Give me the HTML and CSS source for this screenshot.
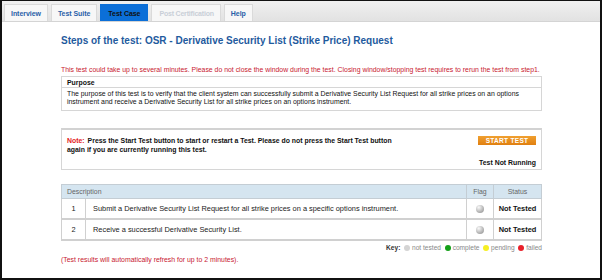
FILE: index.html
```html
<!DOCTYPE html>
<html lang="en">
<head>
    <meta charset="UTF-8">
    <title>Test Case</title>
    <link rel="stylesheet" href="styles.css">
</head>
<body>
    <div class="frame">
        <!-- Tabs -->
        <div class="tabs">
            <a class="tab">Interview</a>
            <a class="tab">Test Suite</a>
            <a class="tab active">Test Case</a>
            <a class="tab disabled">Post Certification</a>
            <a class="tab">Help</a>
        </div>

        <div class="content">
            <h1>Steps of the test: OSR - Derivative Security List (Strike Price) Request</h1>

            <p class="warning">This test could take up to several minutes. Please do not close the window during the test. Closing window/stopping test requires to rerun the test from step1.</p>

            <div class="purpose">
                <div class="purpose-head">Purpose</div>
                <div class="purpose-body">The purpose of this test is to verify that the client system can successfully submit a Derivative Security List Request for all strike prices on an options instrument and receive a Derivative Security List for all strike prices on an options instrument.</div>
            </div>

            <div class="note">
                <div class="note-text"><span class="note-label">Note:</span><span class="note-msg">Press the Start Test button to start or restart a Test. Please do not press the Start Test button again if you are currently running this test.</span></div>
                <div class="note-side">
                    <button class="start-btn">START TEST</button>
                    <div class="run-status">Test Not Running</div>
                </div>
            </div>

            <table class="steps">
                <thead>
                    <tr>
                        <th class="col-desc" colspan="2">Description</th>
                        <th class="col-flag">Flag</th>
                        <th class="col-status">Status</th>
                    </tr>
                </thead>
                <tbody>
                    <tr>
                        <td class="num">1</td>
                        <td class="desc">Submit a Derivative Security List Request for all strike prices on a specific options instrument.</td>
                        <td class="flag"><span class="dot grey"></span></td>
                        <td class="status">Not Tested</td>
                    </tr>
                    <tr>
                        <td class="num">2</td>
                        <td class="desc">Receive a successful Derivative Security List.</td>
                        <td class="flag"><span class="dot grey"></span></td>
                        <td class="status">Not Tested</td>
                    </tr>
                </tbody>
            </table>

            <div class="key">
                <b>Key:</b>
                <span class="mini grey"></span> not tested
                <span class="mini green"></span> complete
                <span class="mini yellow"></span> pending
                <span class="mini red"></span> failed
            </div>

            <p class="refresh">(Test results will automatically refresh for up to 2 minutes).</p>
        </div>
    </div>
</body>
</html>
```

FILE: styles.css
```css
* {
    margin: 0;
    padding: 0;
    box-sizing: border-box;
}

body {
    font-family: 'Liberation Sans', Arial, sans-serif;
    background: #fff;
}

.frame {
    width: 602px;
    height: 280px;
    border: 2px solid #111;
    border-top-width: 1px;
    background: #fff;
    overflow: hidden;
}

/* Tabs */
.tabs {
    display: flex;
    align-items: flex-end;
    gap: 3px;
    height: 21px;
    padding: 0 0 0 2px;
    background: linear-gradient(#f0f0f0, #e2e2e2);
    border-bottom: 1px solid #d4d4d4;
}

.tab {
    height: 17px;
    line-height: 17px;
    padding: 0 6px;
    font-size: 7px;
    font-weight: bold;
    letter-spacing: -0.05px;
    color: #2a5fa8;
    background: #f7f7f7;
    border: 1px solid #dadada;
    border-bottom: none;
}

.tab.active {
    background: #0b6fd8;
    border-color: #0b6fd8;
    padding: 0 7px;
    color: #111;
}

.tab.disabled {
    color: #c9cfd8;
    letter-spacing: -0.2px;
    padding: 0 6px 0 7px;
}

.content {
    padding: 13px 0 0 59px;
    width: 545px;
}

h1 {
    font-size: 10px;
    color: #1f5b9e;
    margin-bottom: 20px;
}

.warning {
    font-size: 6.9px;
    color: #c8202f;
    margin-bottom: 3px;
}

.purpose {
    width: 481px;
    border: 1px solid #d6d6d6;
    font-size: 6.9px;
    color: #111;
}

.purpose-head {
    font-weight: bold;
    padding: 2px 5px 1px;
    border-bottom: 1px solid #d6d6d6;
}

.purpose-body {
    padding: 2px 5px 3px;
    line-height: 1.2;
}

.note {
    display: flex;
    justify-content: space-between;
    width: 481px;
    margin-top: 17px;
    border: 1px solid #d6d6d6;
    border-top: 2px solid #d2d2d2;
    padding: 6px 5px 3px 5px;
    font-size: 6.9px;
    font-weight: bold;
    color: #111;
    height: 42px;
}

.note-text {
    width: 330px;
    line-height: 1.35;
}

.note-label {
    color: #e32222;
    margin-right: 3px;
}

.note-side {
    display: flex;
    flex-direction: column;
    align-items: flex-end;
    justify-content: space-between;
}

.start-btn {
    width: 58px;
    height: 9px;
    border: none;
    background: linear-gradient(#f0a030, #e07f10);
    color: #fff;
    font-family: inherit;
    font-size: 6.5px;
    font-weight: bold;
    letter-spacing: 0.3px;
}

.run-status {
    font-size: 6.9px;
}

/* Steps table */
.steps {
    width: 481px;
    margin-top: 14px;
    border-collapse: collapse;
    font-size: 7.4px;
    color: #222;
    border: 1px solid #d0d0d0;
}

.steps th {
    background: #d5e5f0;
    color: #666;
    font-weight: normal;
    height: 14px;
    border: 1px solid #c4cdd4;
    font-size: 6.9px;
}

.steps th.col-desc {
    text-align: left;
    padding-left: 5px;
}

.col-flag {
    width: 27px;
}

.col-status {
    width: 48px;
}

.steps td {
    height: 21px;
    border: 1px solid #d0d0d0;
    border-bottom: 2px solid #d0d0d0;
}

.steps td.num {
    width: 24px;
    text-align: center;
}

.steps td.desc {
    padding-left: 7px;
}

.steps td.flag {
    text-align: center;
}

.steps td.status {
    text-align: center;
    font-weight: bold;
    color: #111;
}

.dot {
    display: inline-block;
    width: 8px;
    height: 8px;
    border-radius: 50%;
    vertical-align: middle;
}

.dot.grey {
    background: radial-gradient(circle at 35% 30%, #fafafa, #b4b4b4 60%, #8c8c8c);
}

.key {
    text-align: right;
    font-size: 6.6px;
    color: #888;
    margin-top: 3px;
    width: 481px;
}

.key b {
    color: #333;
}

.mini {
    display: inline-block;
    width: 6px;
    height: 6px;
    border-radius: 50%;
    vertical-align: -1px;
    margin-left: 2px;
}

.mini.grey { background: #d4d4d4; }
.mini.green { background: #13a019; }
.mini.yellow { background: #f6ef22; }
.mini.red { background: #e8202a; }

.refresh {
    font-size: 6.9px;
    color: #c8202f;
    margin-top: 5px;
}
```
